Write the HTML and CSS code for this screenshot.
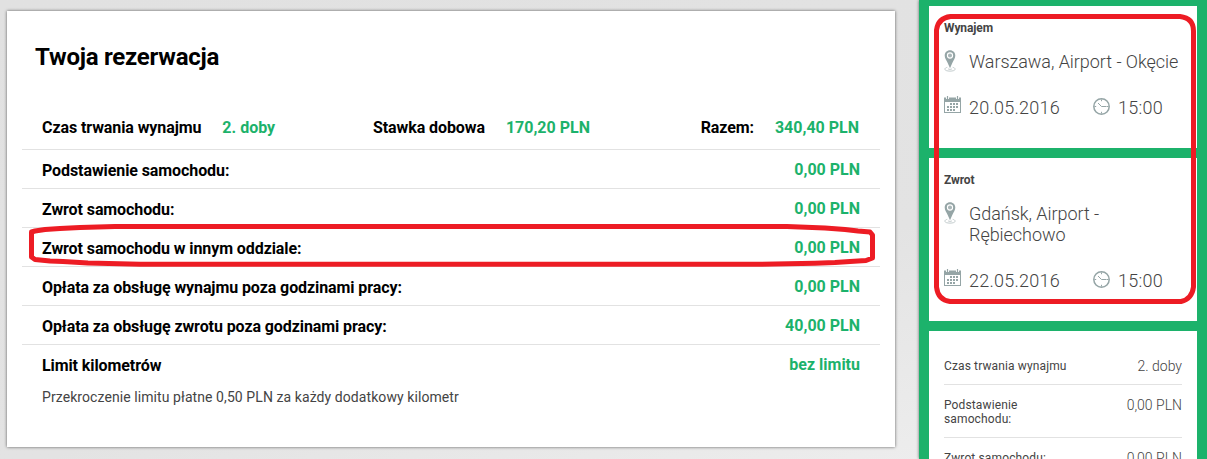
FILE: index.html
```html
<!DOCTYPE html>
<html lang="pl">
<head>
<meta charset="utf-8">
<title>Twoja rezerwacja</title>
<link rel="stylesheet" href="styles.css">
</head>
<body>
<svg class="defs" width="0" height="0" aria-hidden="true">
  <symbol id="pin" viewBox="0 0 12 22">
    <path d="M3.300 17.300C.2 18 .3 19.900 2.300 20.600c2 .7 5.400.7 7.400 0 2-.7 2.100-2.600-1-3.300M4 18.700c.5.900 3.500.9 4 0" fill="none" stroke="#bcc6c7" stroke-width=".9"/>
    <path fill="#95a5a6" d="M6 .2C2.900.2.700 2.600.7 5.500c0 2.600 1.700 4.900 3 7.500L6 18.300 8.300 13c1.300-2.600 3-4.900 3-7.500C11.300 2.600 9.100.2 6 .2z"/>
    <circle cx="6" cy="5.500" r="2.600" fill="#a9b6b7" stroke="#fff" stroke-width="1.100"/>
  </symbol>
  <symbol id="calendar" viewBox="0 0 17 17">
    <path fill="#95a5a6" fill-rule="evenodd" d="M0 1.500h17V17H0zM1 6v10h15V6z"/>
    <path d="M3.500 0v3M13.500 0v3" stroke="#fff" stroke-width="3"/>
    <path d="M3.500 0v3M13.500 0v3" stroke="#95a5a6" stroke-width="1.200"/>
    <path d="M6 8h8.500M3 11h11.500M3 14h8.500" stroke="#95a5a6" stroke-width="2" stroke-dasharray="2 1"/>
  </symbol>
  <symbol id="clock" viewBox="0 0 17 17">
    <circle cx="8.500" cy="8.500" r="7.700" fill="none" stroke="#95a5a6" stroke-width="1.500"/>
    <path d="M5 5l3.500 3.500h5M8.500 1.500v1.700M8.500 13.800v1.700M1.500 8.500h1.700M13.800 8.500h1.700" fill="none" stroke="#95a5a6"/>
  </symbol>
</svg>
<div class="page">
  <main class="booking">
    <h1 class="title"><span>Twoja rezerwacja</span></h1>
    <div class="row summary">
      <div class="pair duration"><span class="label">Czas trwania wynajmu</span><span class="value">2. doby</span></div>
      <div class="pair rate"><span class="label">Stawka dobowa</span><span class="value">170,20 PLN</span></div>
      <div class="pair"><span class="label">Razem:</span><span class="value">340,40 PLN</span></div>
    </div>
    <div class="row"><span class="label">Podstawienie samochodu:</span><span class="value">0,00 PLN</span></div>
    <div class="row"><span class="label">Zwrot samochodu:</span><span class="value">0,00 PLN</span></div>
    <div class="row"><span class="label">Zwrot samochodu w innym oddziale:</span><span class="value">0,00 PLN</span></div>
    <div class="row"><span class="label">Opłata za obsługę wynajmu poza godzinami pracy:</span><span class="value">0,00 PLN</span></div>
    <div class="row"><span class="label">Opłata za obsługę zwrotu poza godzinami pracy:</span><span class="value">40,00 PLN</span></div>
    <div class="row last"><span class="label">Limit kilometrów</span><span class="value">bez limitu</span></div>
    <p class="note">Przekroczenie limitu płatne 0,50 PLN za każdy dodatkowy kilometr</p>
  </main>
  <aside class="side">
    <section class="panel pickup">
      <h2 class="heading">Wynajem</h2>
      <div class="place"><svg class="pin"><use href="#pin"/></svg><span>Warszawa, Airport - Okęcie</span></div>
      <div class="when">
        <svg class="icon"><use href="#calendar"/></svg><span class="date">20.05.2016</span>
        <svg class="icon clock"><use href="#clock"/></svg><span class="time">15:00</span>
      </div>
    </section>
    <section class="panel dropoff">
      <h2 class="heading">Zwrot</h2>
      <div class="place"><svg class="pin"><use href="#pin"/></svg><span>Gdańsk, Airport -<br>Rębiechowo</span></div>
      <div class="when">
        <svg class="icon"><use href="#calendar"/></svg><span class="date">22.05.2016</span>
        <svg class="icon clock"><use href="#clock"/></svg><span class="time">15:00</span>
      </div>
    </section>
    <section class="panel costs">
      <div class="cost"><span class="name">Czas trwania wynajmu</span><span class="amount">2. doby</span></div>
      <div class="cost"><span class="name">Podstawienie<br>samochodu:</span><span class="amount">0,00 PLN</span></div>
      <div class="cost"><span class="name">Zwrot samochodu:</span><span class="amount">0,00 PLN</span></div>
    </section>
  </aside>
</div>
<svg class="marks" width="1207" height="459" viewBox="0 0 1207 459" aria-hidden="true">
  <path d="M31.500 232L35 231 45 229.500 60 228.500 80 227.500 115 226.500H787L825 228 845 229.500 858 231 870 232 872.500 235V258L866 260.500 850 261.500 835 262.500 815 263.300 761 264.300H140L88 263 63 261.500 50 261 35 259.500 31.500 257Z"/>
  <path d="M950.500 16.500H1180Q1193.500 18 1193.500 31V287Q1192 299 1181 301.500H950Q938 300 936.500 287V30Q938 18 950.500 16.500Z"/>
</svg>
</body>
</html>
```

FILE: styles.css
```css
* { box-sizing: border-box; }
body {
  margin: 0;
  height: 459px;
  overflow: hidden;
  font-family: Roboto, sans-serif;
  color: #444;
  background: linear-gradient(165deg, #e1e1e1 0%, #e3e3e3 60%, #f0f0f0 100%);
}
.defs, .marks { position: absolute; top: 0; left: 0; }
.marks { fill: none; stroke: #ed1c24; stroke-width: 5; stroke-linejoin: round; pointer-events: none; }
.page { display: flex; justify-content: space-between; height: 459px; overflow: hidden; }
.booking {
  width: 888px;
  height: 436px;
  margin: 11px 0 0 7px;
  padding: 0 15px;
  background: #fff;
  box-shadow: 0 0 3px rgba(0, 0, 0, .6);
}
.title {
  margin: 0;
  height: 94px;
  padding: 31px 0 0 13px;
  font-size: 24px;
  line-height: 30px;
  font-weight: 700;
  letter-spacing: -.25px;
  color: #000;
}
.row {
  display: flex;
  justify-content: space-between;
  width: 858px;
  height: 39px;
  padding: 1px 20px 0 20px;
  border-bottom: 1px solid #e2e2e2;
  font-size: 16px;
  line-height: 38px;
  font-weight: 700;
  white-space: nowrap;
}
.row.summary { height: 45px; padding-top: 4px; padding-right: 21px; }
.row.last { border-bottom: 0; }
.pair { display: flex; gap: 21px; }
.duration { width: 331px; }
.rate { flex: 1; }
.label { color: #000; letter-spacing: -.09px; }
.row > .label { padding-top: 1px; }
.value { color: #1cb26b; }
.note { margin: 3px 0 0 20px; font-size: 14px; line-height: 20px; letter-spacing: .08px; }
.side {
  width: 288px;
  height: 459px;
  padding: 6px 10px 0;
  display: flex;
  flex-direction: column;
  gap: 10px;
  background: #1cb26b;
  box-shadow: 0 0 3px rgba(0, 0, 0, .55);
}
.panel { flex: none; padding: 14px 15px 0; background: #fff; }
.pickup { height: 142px; }
.dropoff { height: 163px; }
.costs { height: 200px; padding-top: 15px; }
.heading { margin: 0; font-size: 12px; line-height: 16px; font-weight: 700; letter-spacing: -.1px; }
.place { display: flex; gap: 13px; margin-top: 14px; font-size: 18px; line-height: 21px; font-weight: 300; letter-spacing: -.05px; white-space: nowrap; }
.place span { padding-top: 1px; }
.pin { width: 12px; height: 22px; }
.when { display: flex; align-items: flex-start; margin-top: 24px; font-size: 18px; line-height: 24px; font-weight: 300; letter-spacing: .25px; }
.icon { width: 17px; height: 17px; }
.date { width: 124px; margin-left: 8px; }
.time { margin-left: 8px; }
.clock { margin-top: 2px; }
.cost { display: flex; justify-content: space-between; padding: 13px 0 11px; border-bottom: 1px solid #e2e2e2; font-size: 12px; line-height: 14px; }
.name { letter-spacing: .13px; }
.amount { font-size: 14px; font-weight: 300; }
```
